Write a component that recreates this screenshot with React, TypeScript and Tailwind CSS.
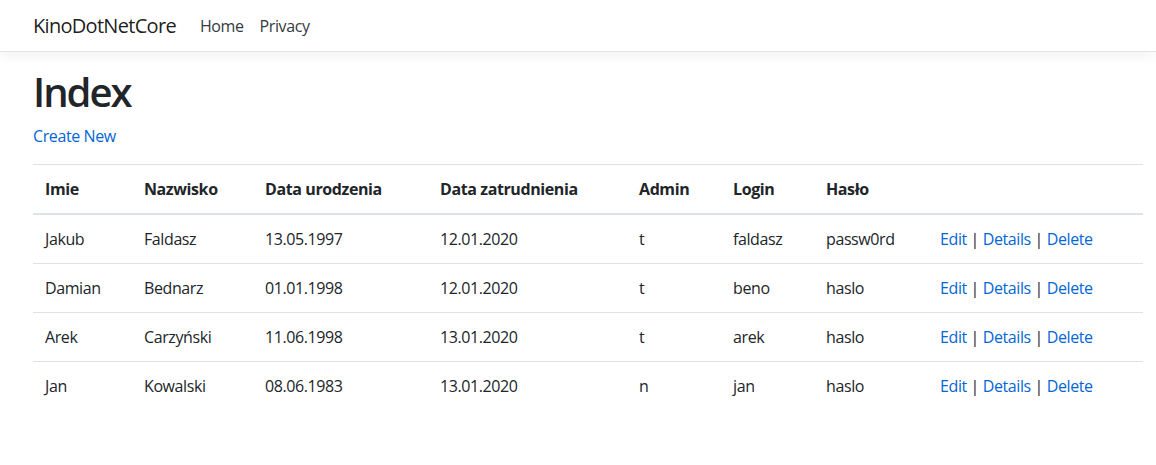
import React from "react";

const rows = [
  ["Jakub", "Faldasz", "13.05.1997", "12.01.2020", "t", "faldasz", "passw0rd"],
  ["Damian", "Bednarz", "01.01.1998", "12.01.2020", "t", "beno", "haslo"],
  ["Arek", "Carzyński", "11.06.1998", "13.01.2020", "t", "arek", "haslo"],
  ["Jan", "Kowalski", "08.06.1983", "13.01.2020", "n", "jan", "haslo"],
];

const headers = ["Imie", "Nazwisko", "Data urodzenia", "Data zatrudnienia", "Admin", "Login", "Hasło", ""];
const widths = ["w-[99px]", "w-[121px]", "w-[175px]", "w-[199px]", "w-[94px]", "w-[93px]", "w-[114px]", "w-[215px]"];

export default function App() {
  return (
    <div className="min-h-[465px] bg-white text-[#212529] text-[16px] leading-[24px] tracking-[-0.025em]" style={{ fontFamily: '"Open Sans", "Noto Sans", sans-serif' }}>
      <header>
        <nav className="h-[52px] flex items-center border-b border-[#e5e5e5] bg-white shadow-[0_4px_12px_rgba(0,0,0,0.05)] pl-[33px]">
          <a className="text-[20px] leading-[30px] tracking-[-0.035em] text-[rgba(0,0,0,0.9)] mr-[16px]">KinoDotNetCore</a>
          <a className="px-[8px] text-[#343a40]">Home</a>
          <a className="px-[8px] text-[#343a40]">Privacy</a>
        </nav>
      </header>
      <main className="pl-[33px] pt-[16px] pb-[16px]">
        <h1 className="text-[40px] leading-[48px] font-semibold tracking-[-0.05em] mb-[8px]">Index</h1>
        <p className="mb-[16px]">
          <a className="text-[#0366d6]">Create New</a>
        </p>
        <table className="w-[1110px] border-collapse table-fixed">
          <thead>
            <tr>
              {headers.map((h, i) => (
                <th key={i} className={`${widths[i]} text-left font-bold p-[12px] border-t border-t-[#dee2e6] border-b-2 border-b-[#dee2e6]`}>
                  {h}
                </th>
              ))}
            </tr>
          </thead>
          <tbody>
            {rows.map((r, ri) => (
              <tr key={ri}>
                {r.map((c, ci) => (
                  <td key={ci} className="p-[12px] border-t border-[#dee2e6]">
                    {c}
                  </td>
                ))}
                <td className="p-[12px] border-t border-[#dee2e6]">
                  <a className="text-[#0366d6]">Edit</a> | <a className="text-[#0366d6]">Details</a> |{" "}
                  <a className="text-[#0366d6]">Delete</a>
                </td>
              </tr>
            ))}
          </tbody>
        </table>
      </main>
    </div>
  );
}
